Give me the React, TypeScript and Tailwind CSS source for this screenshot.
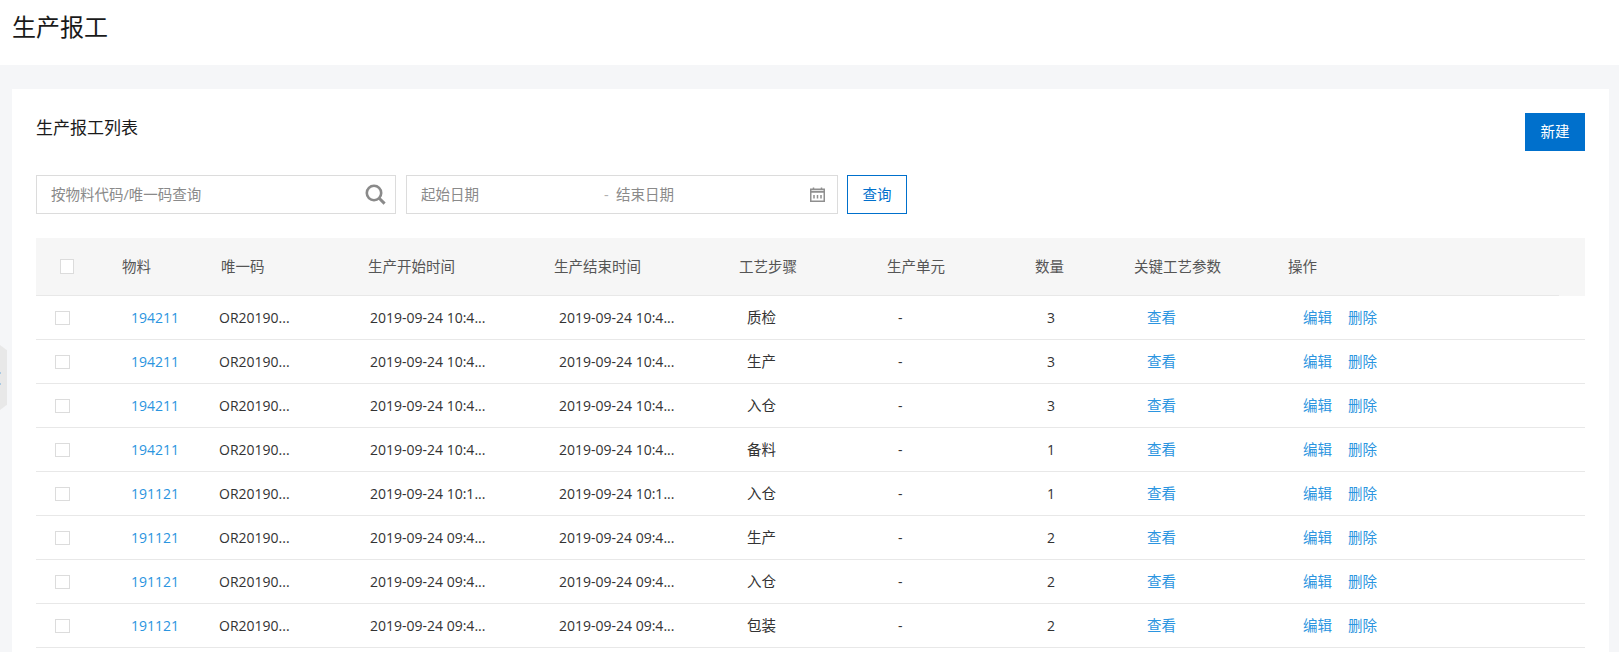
import React from "react";

const font = "font-['Microsoft_YaHei','Open_Sans','Noto_Sans_CJK_SC',sans-serif]";

const rows = [
  { code: "194211", start: "2019-09-24 10:4...", step: "质检", qty: 3 },
  { code: "194211", start: "2019-09-24 10:4...", step: "生产", qty: 3 },
  { code: "194211", start: "2019-09-24 10:4...", step: "入仓", qty: 3 },
  { code: "194211", start: "2019-09-24 10:4...", step: "备料", qty: 1 },
  { code: "191121", start: "2019-09-24 10:1...", step: "入仓", qty: 1 },
  { code: "191121", start: "2019-09-24 09:4...", step: "生产", qty: 2 },
  { code: "191121", start: "2019-09-24 09:4...", step: "入仓", qty: 2 },
  { code: "191121", start: "2019-09-24 09:4...", step: "包装", qty: 2 },
];

function SearchIcon() {
  return (
    <svg width="21" height="21" viewBox="0 0 21 21" fill="none" stroke="#8a8a8a">
      <circle cx="9" cy="9" r="7.2" strokeWidth="2.6" />
      <path d="M14.2 14.2 L19.6 19.6" strokeWidth="3" />
    </svg>
  );
}

function CalendarIcon() {
  return (
    <svg width="15" height="15" viewBox="0 0 15 15" fill="none" stroke="#8f8f8f">
      <rect x="0.75" y="2.25" width="13.5" height="12" strokeWidth="1.5" />
      <path d="M1 4.75 H14" strokeWidth="2" />
      <path d="M3.5 0.5 V3 M11.5 0.5 V3" strokeWidth="1.5" />
      <path d="M4 8 V11.5 M7.5 8 V11.5 M11 8 V11.5" strokeWidth="1.5" />
    </svg>
  );
}

function Row({ code, start, step, qty }: (typeof rows)[number]) {
  return (
    <div className="grid h-11 grid-cols-[95px_88px_151px_189px_188px_151px_148px_101px_156px_1fr] items-center border-b border-[#e8e8e8] text-sm text-[#333]">
      <div className="pl-[19px]">
        <div className="h-[14px] w-[15px] border border-[#dcdcdc] bg-white" />
      </div>
      <a className="text-[#2b95e0]">{code}</a>
      <div>OR20190...</div>
      <div>{start}</div>
      <div>{start}</div>
      <div className="pt-px text-[14.5px]">{step}</div>
      <div>-</div>
      <div className="pl-px">{qty}</div>
      <a className="pt-px text-[14.5px] text-[#2b95e0]">查看</a>
      <div className="flex gap-4 pt-px text-[14.5px] text-[#2b95e0]">
        <a>编辑</a>
        <a>删除</a>
      </div>
    </div>
  );
}

export default function App() {
  return (
    <div className={`relative h-[652px] overflow-hidden bg-[#f5f6f8] ${font}`}>
      <header className="flex h-[65px] items-center bg-white pb-3 pl-3">
        <h1 className="text-2xl font-normal text-[#1a1a1a]">生产报工</h1>
      </header>

      {/* collapsed side menu handle */}
      <div className="absolute left-0 top-[345px] h-[65px] w-[7px] bg-[#e8e8e8] [clip-path:polygon(0_0,100%_8%,100%_92%,0_100%)]">
        <div className="absolute left-0 top-[27px] h-[2px] w-[1px] bg-[#a9c9e2]" />
        <div className="absolute left-0 top-[38px] h-[2px] w-[1px] bg-[#a9c9e2]" />
      </div>

      <main className="ml-3 mr-[10px] mt-6 h-[600px] bg-white px-6">
        <div className="flex items-start justify-between pt-6">
          <h2 className="pt-[3px] text-[17px] font-normal leading-6 text-[#1a1a1a]">生产报工列表</h2>
          <button className="h-[38px] w-[60px] bg-[#0070cc] text-[14.5px] text-white">新建</button>
        </div>

        <div className="mt-6 flex h-[39px] items-stretch">
          <div className="flex w-[360px] items-center justify-between border border-[#dcdcdc] pl-[14px] pr-[9px] text-[14.5px] text-[#8a8a8a]">
            <span className="pt-px">按物料代码/唯一码查询</span>
            <SearchIcon />
          </div>
          <div className="ml-[10px] flex w-[432px] items-center border border-[#dcdcdc] pl-[14px] pr-[12px] text-[14.5px] text-[#8a8a8a]">
            <span className="w-[183px] pt-px">起始日期</span>
            <span className="w-[12px] pt-px text-[#b0b0b0]">-</span>
            <span className="flex-1 pt-px">结束日期</span>
            <CalendarIcon />
          </div>
          <button className="ml-[9px] w-[60px] border border-[#0070cc] pt-px text-[14.5px] text-[#0070cc]">查询</button>
        </div>

        <div className="mt-6">
          <div className="bg-[#f6f6f6]">
            <div className="grid h-[58px] w-[1523px] grid-cols-[86px_99px_147px_186px_185px_148px_148px_99px_154px_1fr] items-center border-b border-[#e8e8e8] text-[14.5px] text-[#555]">
              <div className="pl-6">
                <div className="h-[15px] w-[14px] border border-[#dcdcdc] bg-white" />
              </div>
              <div>物料</div>
              <div>唯一码</div>
              <div>生产开始时间</div>
              <div>生产结束时间</div>
              <div>工艺步骤</div>
              <div>生产单元</div>
              <div>数量</div>
              <div>关键工艺参数</div>
              <div>操作</div>
            </div>
          </div>
          {rows.map((r, i) => (
            <Row key={i} {...r} />
          ))}
        </div>
      </main>
    </div>
  );
}
